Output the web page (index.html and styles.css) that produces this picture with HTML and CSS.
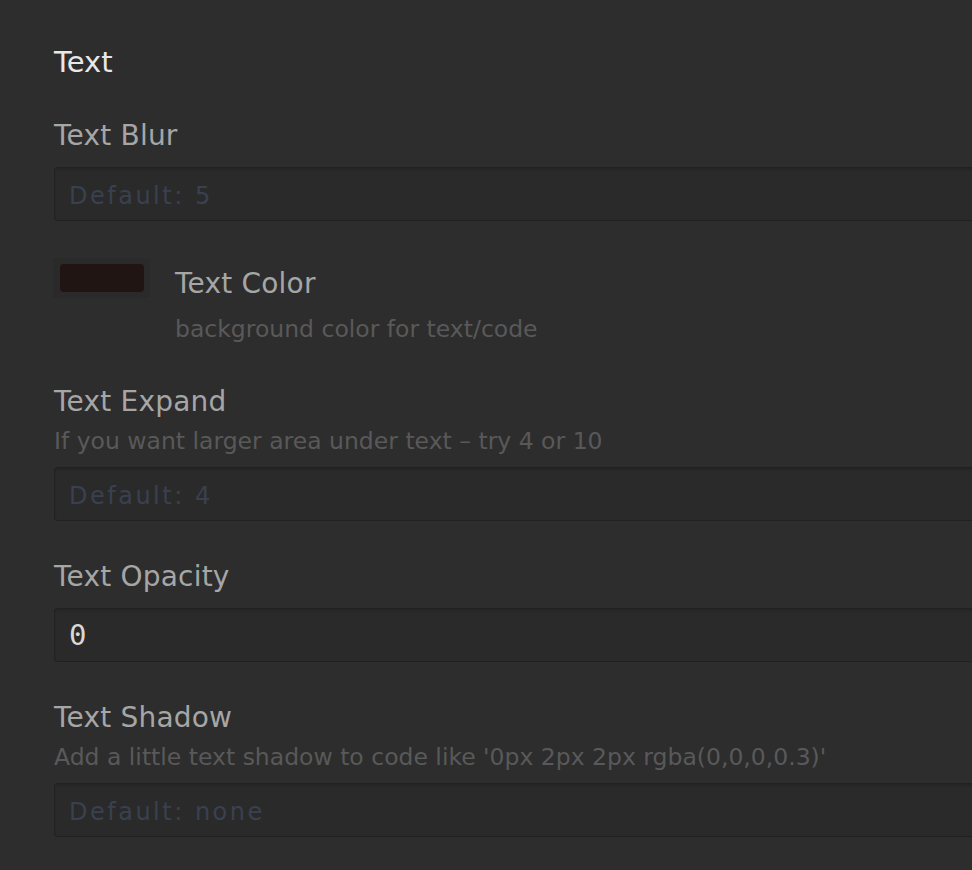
FILE: index.html
```html
<!DOCTYPE html>
<html lang="en">
<head>
<meta charset="utf-8">
<title>Text settings</title>
<link rel="stylesheet" href="styles.css">
</head>
<body>
<div class="panel">
  <h2 class="heading">Text</h2>

  <div class="field field-blur">
    <label class="label">Text Blur</label>
    <input class="input" type="text" placeholder="Default: 5">
  </div>

  <div class="color-row">
    <div class="swatch"><span class="swatch-fill"></span></div>
    <div class="color-text">
      <div class="label">Text Color</div>
      <div class="desc desc-color">background color for text/code</div>
    </div>
  </div>

  <div class="field field-expand">
    <label class="label">Text Expand</label>
    <div class="desc">If you want larger area under text – try 4 or 10</div>
    <input class="input" type="text" placeholder="Default: 4">
  </div>

  <div class="field field-opacity">
    <label class="label">Text Opacity</label>
    <input class="input" type="text" value="0">
  </div>

  <div class="field field-shadow">
    <label class="label">Text Shadow</label>
    <div class="desc">Add a little text shadow to code like '0px 2px 2px rgba(0,0,0,0.3)'</div>
    <input class="input" type="text" placeholder="Default: none">
  </div>
</div>
</body>
</html>
```

FILE: styles.css
```css
html, body {
  margin: 0;
  padding: 0;
  background: #2d2d2d;
  overflow: hidden;
}

body {
  font-family: "DejaVu Sans", "Liberation Sans", sans-serif;
}

.panel {
  width: 1100px;
  padding: 45px 0 0 54px;
  display: flex;
  flex-direction: column;
}

.heading {
  margin: 0 0 41px 0;
  font-size: 29px;
  line-height: 34px;
  font-weight: normal;
  color: #e8e8e8;
}

.field {
  display: flex;
  flex-direction: column;
}

.label {
  display: block;
  font-size: 28px;
  line-height: 32px;
  color: #a6a6a6;
  letter-spacing: 0.2px;
}

.desc {
  font-size: 23.5px;
  line-height: 28px;
  color: #595959;
  margin-top: 9px;
}

.field-blur .label,
.field-opacity .label {
  margin-bottom: 15px;
}

.field-expand .desc,
.field-shadow .desc {
  margin-bottom: 12px;
}

.input {
  box-sizing: border-box;
  width: 1000px;
  height: 54px;
  margin: 0;
  padding: 0 0 0 14px;
  background: #2a2a2a;
  border: 1px solid #212121;
  border-radius: 3px;
  box-shadow: inset 0 2px 2px rgba(0, 0, 0, 0.12);
  color: #d8d8d8;
  font-family: "DejaVu Sans Mono", "Liberation Mono", monospace;
  font-size: 29px;
  outline: none;
}

.input::placeholder {
  color: #394150;
  font-family: "DejaVu Sans", "Liberation Sans", sans-serif;
  font-size: 24px;
  letter-spacing: 2.5px;
}

.field-blur {
  margin-bottom: 37px;
}

.color-row {
  display: flex;
  align-items: flex-start;
  gap: 25px;
  margin-left: -1px;
  margin-bottom: 43px;
}

.swatch {
  box-sizing: border-box;
  width: 97px;
  height: 40px;
  padding: 6px 6px 6px 7px;
  background: #2a2a2a;
  border-radius: 3px;
  display: flex;
}

.swatch-fill {
  flex: 1;
  background: #201513;
  border-radius: 4px;
}

.color-text {
  padding-top: 10px;
  display: flex;
  flex-direction: column;
}

.desc-color {
  margin-top: 15px;
}

.field-expand {
  margin-bottom: 40px;
}

.field-opacity {
  margin-bottom: 40px;
}
```
